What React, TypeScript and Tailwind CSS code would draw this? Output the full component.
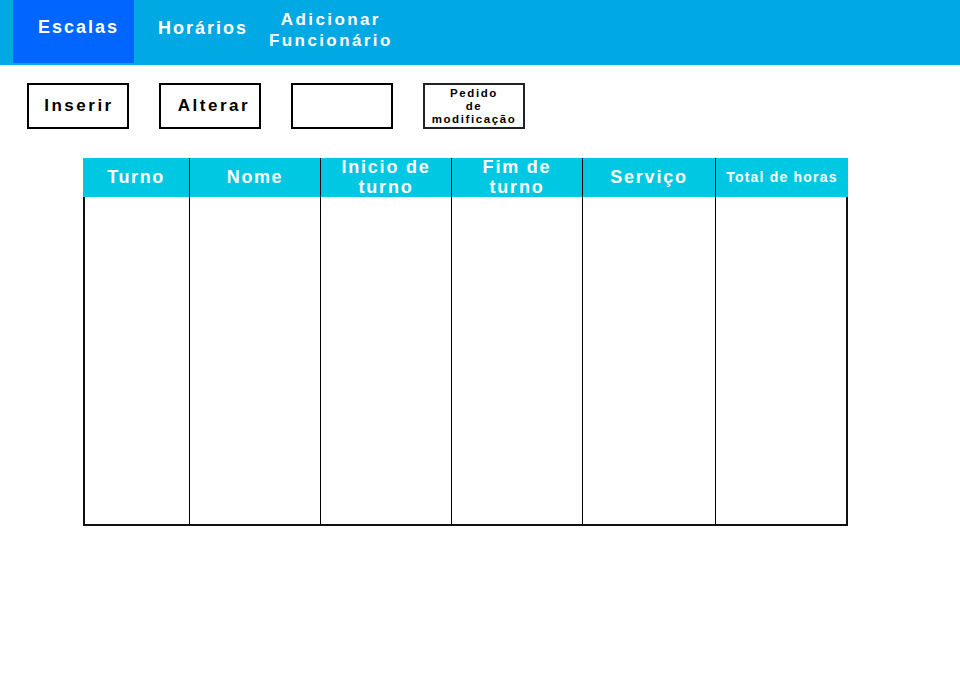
import React from "react";

const cols = [
  { w: "w-[107px]", label: ["Turno"], size: "text-[18px] tracking-[1.6px]" },
  { w: "w-[131px]", label: ["Nome"], size: "text-[18px] tracking-[1.6px]" },
  { w: "w-[131px]", label: ["Inicio de", "turno"], size: "text-[18px] tracking-[1.8px]" },
  { w: "w-[131px]", label: ["Fim de", "turno"], size: "text-[18px] tracking-[1.8px]" },
  { w: "w-[133px]", label: ["Serviço"], size: "text-[18px] tracking-[1.8px]" },
  { w: "w-[132px]", label: ["Total de horas"], size: "text-[14px] tracking-[1.2px]" },
];

const App = () => {
  return (
    <div className="w-[960px] h-[678px] bg-white font-['Liberation_Sans',Arial,sans-serif] font-bold">
      <header className="h-[65px] bg-[#00a8e4] flex items-start text-white">
        <div className="ml-[13px] w-[121px] h-[63px] bg-[#0066ff] flex items-center justify-center pl-[10px] pb-[8px] text-[18px] tracking-[2px]">
          Escalas
        </div>
        <div className="ml-[24px] h-[63px] flex items-center pb-[6px] text-[18px] tracking-[2px]">Horários</div>
        <div className="ml-[21px] h-[63px] flex items-center pb-[4px] text-[17px] leading-[21px] tracking-[2.4px] text-center">
          Adicionar
          <br />
          Funcionário
        </div>
      </header>

      <div className="flex gap-[30px] ml-[27px] mt-[18px] text-black">
        <button className="w-[102px] h-[46px] border-2 border-black text-[17px] tracking-[2.5px] flex items-center justify-center pl-[2px]">
          Inserir
        </button>
        <button className="w-[102px] h-[46px] border-2 border-black text-[17px] tracking-[2.5px] flex items-center justify-center pl-[8px]">
          Alterar
        </button>
        <button className="w-[102px] h-[46px] border-2 border-black" />
        <button className="w-[102px] h-[46px] border-2 border-[#222] text-[11.5px] leading-[13px] tracking-[1.6px] flex items-center justify-center text-center">
          Pedido
          <br />
          de
          <br />
          modificação
        </button>
      </div>

      <div className="ml-[83px] mt-[29px] w-[765px]">
        <div className="flex h-[39px] bg-[#00c8e2] text-white">
          {cols.map((c, i) => (
            <div
              key={i}
              className={`${c.w} ${c.size} ${i < cols.length - 1 ? "border-r border-black" : ""} flex items-center justify-center text-center leading-[20px] pb-[2px]`}
            >
              <div>
                {c.label.map((l, j) => (
                  <div key={j}>{l}</div>
                ))}
              </div>
            </div>
          ))}
        </div>
        <div className="flex h-[329px] border-2 border-t-0 border-[#111]">
          {cols.map((c, i) => (
            <div
              key={i}
              className={`${i === 0 ? "w-[105px]" : i === cols.length - 1 ? "w-[130px]" : c.w} ${i < cols.length - 1 ? "border-r border-black" : ""}`}
            />
          ))}
        </div>
      </div>
    </div>
  );
};

export default App;
